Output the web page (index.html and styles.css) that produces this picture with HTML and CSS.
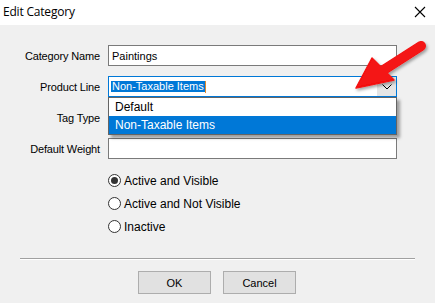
FILE: index.html
```html
<!DOCTYPE html>
<html>
<head>
<meta charset="utf-8">
<link rel="stylesheet" href="styles.css">
</head>
<body>
<div class="window">
  <div class="titlebar">
    <span class="title">Edit Category</span>
    <svg class="close" width="12" height="12" viewBox="0 0 12 12"><path d="M1 1 L11 11 M11 1 L1 11" stroke="#000" stroke-width="1.1" fill="none"/></svg>
  </div>
  <div class="content">
    <div class="row">
      <label class="label">Category Name</label>
      <div class="field">Paintings</div>
    </div>
    <div class="row">
      <label class="label">Product Line</label>
      <div class="select">
        <span class="sel-text">Non-Taxable Items</span><span class="caret"></span>
        <div class="dd-btn">
          <svg width="10" height="6" viewBox="0 0 10 6"><path d="M0.5 0.5 L5 5 L9.5 0.5" stroke="#000" stroke-width="1" fill="none"/></svg>
        </div>
        <div class="dropdown">
          <div class="opt">Default</div>
          <div class="opt active">Non-Taxable Items</div>
        </div>
      </div>
    </div>
    <div class="row">
      <label class="label">Tag Type</label>
      <div class="field"></div>
    </div>
    <div class="row">
      <label class="label">Default Weight</label>
      <div class="field"></div>
    </div>
    <div class="radios">
      <div class="radio-row"><span class="radio checked"></span><span>Active and Visible</span></div>
      <div class="radio-row"><span class="radio"></span><span>Active and Not Visible</span></div>
      <div class="radio-row"><span class="radio"></span><span>Inactive</span></div>
    </div>
    <div class="separator"></div>
    <div class="buttons">
      <button class="btn">OK</button>
      <button class="btn">Cancel</button>
    </div>
  </div>
  <svg class="pointer" width="435" height="303" viewBox="0 0 435 303">
    <defs>
      <filter id="sh" x="-20%" y="-20%" width="150%" height="150%">
        <feDropShadow dx="1.5" dy="2" stdDeviation="1.5" flood-color="#000" flood-opacity="0.35"/>
      </filter>
    </defs>
    <g filter="url(#sh)" fill="#f41212" stroke="#f41212">
      <line x1="421" y1="46" x2="382" y2="71" stroke-width="10" stroke-linecap="round"/>
      <polygon points="356,88 372,58 394,80" stroke-width="1.5" stroke-linejoin="round"/>
    </g>
  </svg>
</div>
</body>
</html>
```
FILE: styles.css
```css
* { box-sizing: border-box; }
html, body { margin: 0; padding: 0; }
body {
  width: 435px;
  height: 303px;
  overflow: hidden;
  background: #f0f0f0;
  font-family: "Liberation Sans", Arial, sans-serif;
  font-size: 11px;
  color: #000;
}
.window {
  position: relative;
  width: 435px;
  height: 303px;
  background: #f0f0f0;
}
.titlebar {
  height: 25px;
  background: #fff;
  display: flex;
  align-items: center;
  justify-content: space-between;
  padding: 0 9px 0 3px;
}
.title {
  font-family: "Open Sans", "Noto Sans", sans-serif;
  font-size: 12px;
  letter-spacing: -0.2px;
  padding-bottom: 2px;
}
.close { display: block; margin-top: -2px; }
.content {
  padding-top: 20px;
  display: flex;
  flex-direction: column;
}
.row {
  display: flex;
  align-items: center;
  height: 21px;
  margin-bottom: 10px;
}
.label {
  width: 100px;
  text-align: right;
  margin-right: 8px;
  letter-spacing: -0.15px;
}
.field {
  width: 289px;
  height: 21px;
  background: #fff;
  border: 1px solid #7a7a7a;
  padding: 0 3px;
  display: flex;
  align-items: center;
}
.select {
  position: relative;
  width: 289px;
  height: 21px;
  background: #fff;
  border: 1px solid #0078d7;
  padding: 0 2px;
  display: flex;
  align-items: center;
}
.sel-text {
  background: #0078d7;
  color: #fff;
  line-height: 11px;
  padding: 0 1px 0 1px;
}
.caret {
  width: 1px;
  height: 12px;
  background: #e08a2e;
}
.dd-btn {
  position: absolute;
  right: 0;
  top: 0;
  width: 19px;
  height: 19px;
  background: #e5e5e5;
  display: flex;
  align-items: center;
  justify-content: center;
}
.dd-btn svg { display: block; }
.dropdown {
  position: absolute;
  left: -1px;
  top: 20px;
  width: 289px;
  background: #fff;
  border: 1px solid #646464;
  box-shadow: 3px 3px 3px rgba(0,0,0,0.35);
  z-index: 2;
}
.opt {
  height: 18px;
  padding-left: 6px;
  display: flex;
  align-items: center;
  font-size: 12px;
}
.opt.active {
  background: #0078d7;
  color: #fff;
}
.radios {
  margin-top: 0;
  padding-left: 108px;
  display: flex;
  flex-direction: column;
}
.radio-row {
  height: 23px;
  display: flex;
  align-items: center;
  font-size: 12px;
}
.radio {
  width: 13px;
  height: 13px;
  border: 1px solid #333;
  border-radius: 50%;
  background: #fff;
  margin-right: 3px;
  display: flex;
  align-items: center;
  justify-content: center;
}
.radio.checked::after {
  content: "";
  width: 7px;
  height: 7px;
  border-radius: 50%;
  background: #333;
}
.separator {
  margin: 20px 20px 0 20px;
  height: 2px;
  border-top: 1px solid #a0a0a0;
  border-bottom: 1px solid #fff;
}
.buttons {
  display: flex;
  gap: 12px;
  padding-left: 138px;
  margin-top: 11px;
}
.btn {
  width: 73px;
  height: 23px;
  background: #e1e1e1;
  border: 1px solid #adadad;
  font-family: "Liberation Sans", Arial, sans-serif;
  font-size: 11px;
  color: #000;
  padding: 0;
}
.pointer {
  position: absolute;
  left: 0;
  top: 0;
  pointer-events: none;
  z-index: 5;
}
```
